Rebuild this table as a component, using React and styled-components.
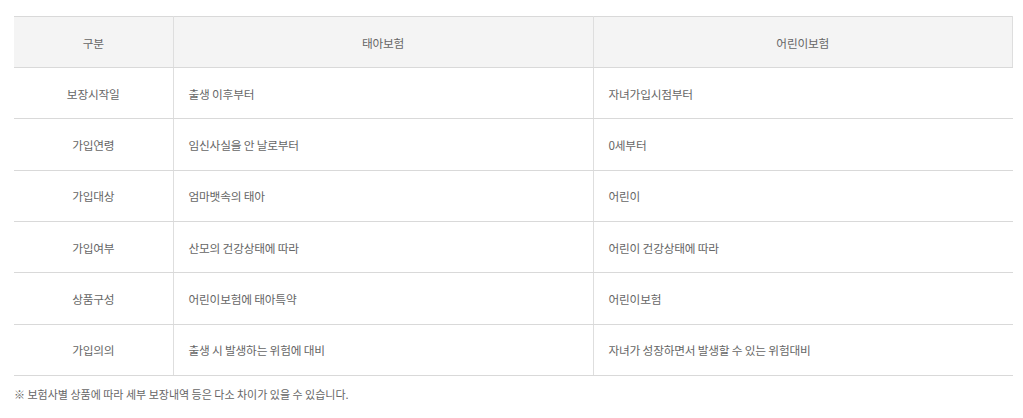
import React from "react";
import styled, { createGlobalStyle } from "styled-components";

const GlobalStyle = createGlobalStyle`
  html, body { margin: 0; padding: 0; background: #fff; }
  body { font-family: "Noto Sans CJK KR", "Noto Sans", sans-serif; }
`;

const Wrap = styled.div`
  padding: 16px 10px 0 14px;
`;

const Table = styled.table`
  width: 999px;
  border-collapse: collapse;
  table-layout: fixed;
  font-size: 11.7px;
  letter-spacing: -0.2px;
  color: #666;
`;

const HeadCell = styled.th`
  height: 50px;
  padding: 0;
  background: #f4f4f4;
  border-top: 1px solid #d9d9d9;
  border-bottom: 1px solid #d9d9d9;
  border-left: 1px solid #dedede;
  border-right: 1px solid #dedede;
  font-weight: normal;
  text-align: center;
  &:first-child { border-left: none; }
`;

const Row = styled.tr`
  height: 51.33px;
`;

const Cell = styled.td`
  padding: 0 0 0 ${(p) => (p.$center ? 0 : 15)}px;
  border-bottom: 1px solid #d9d9d9;
  border-left: 1px solid #dedede;
  text-align: ${(p) => (p.$center ? "center" : "left")};
  &:first-child { border-left: none; }
`;

const Note = styled.p`
  margin: 10px 0 0;
  font-size: 11px;
  color: #666;
`;

const rows = [
  ["보장시작일", "출생 이후부터", "자녀가입시점부터"],
  ["가입연령", "임신사실을 안 날로부터", "0세부터"],
  ["가입대상", "엄마뱃속의 태아", "어린이"],
  ["가입여부", "산모의 건강상태에 따라", "어린이 건강상태에 따라"],
  ["상품구성", "어린이보험에 태아특약", "어린이보험"],
  ["가입의의", "출생 시 발생하는 위험에 대비", "자녀가 성장하면서 발생할 수 있는 위험대비"],
];

export default function App() {
  return (
    <Wrap>
      <GlobalStyle />
      <Table>
        <colgroup>
          <col style={{ width: 159 }} />
          <col style={{ width: 420 }} />
          <col />
        </colgroup>
        <thead>
          <tr>
            <HeadCell>구분</HeadCell>
            <HeadCell>태아보험</HeadCell>
            <HeadCell>어린이보험</HeadCell>
          </tr>
        </thead>
        <tbody>
          {rows.map((r) => (
            <Row key={r[0]}>
              <Cell $center>{r[0]}</Cell>
              <Cell>{r[1]}</Cell>
              <Cell>{r[2]}</Cell>
            </Row>
          ))}
        </tbody>
      </Table>
      <Note>※ 보험사별 상품에 따라 세부 보장내역 등은 다소 차이가 있을 수 있습니다.</Note>
    </Wrap>
  );
}
